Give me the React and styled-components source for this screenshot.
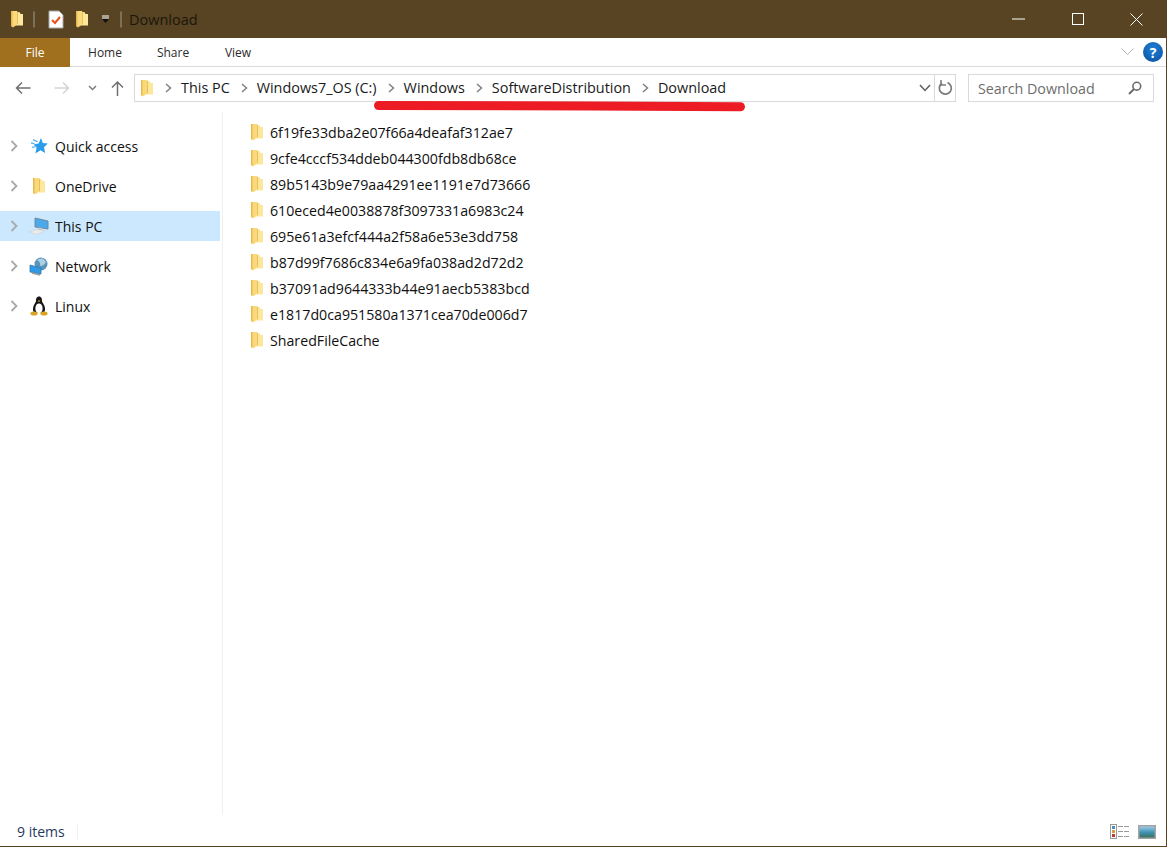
import React from "react";
import styled, { createGlobalStyle } from "styled-components";

const GlobalStyle = createGlobalStyle`
  html, body {
    margin: 0;
    padding: 0;
    background: #fff;
  }
  body {
    font-family: "Open Sans", "Noto Sans", "Liberation Sans", sans-serif;
    font-size: 14px;
    color: #1a1a1a;
  }
`;

const Page = styled.div`
  position: relative;
  width: 1168px;
  height: 848px;
  overflow: hidden;
`;

const Window = styled.div`
  width: 1166px;
  height: 846px;
  display: flex;
  flex-direction: column;
  border-right: 1px solid #584423;
  border-bottom: 1px solid #584423;
  background: #fff;
`;

const TitleBar = styled.div`
  height: 38px;
  flex: none;
  display: flex;
  align-items: center;
  background: #584423;
  padding-left: 10px;
`;

const TitleDivider = styled.span`
  width: 2px;
  height: 17px;
  margin-left: ${(p) => p.$left}px;
  border: 1px solid #7d7058;
  border-radius: 1px;
  box-sizing: border-box;
`;

const ChecklistIcon = styled.svg`
  margin-left: 13px;
  flex: none;
`;

const QuickFolder = styled.span`
  margin-left: 11px;
  display: flex;
`;

const QuickMenu = styled.svg`
  margin-left: 12px;
  flex: none;
`;

const TitleText = styled.span`
  font-size: 14.5px;
  color: #1c160a;
  margin-left: 7px;
`;

const WindowButtons = styled.div`
  margin-left: auto;
  display: flex;
  height: 100%;
  align-items: center;
`;

const WindowButton = styled.div`
  width: 59px;
  display: flex;
  justify-content: center;
  align-items: center;
  color: #fff;
`;

const Tabs = styled.div`
  height: 29px;
  flex: none;
  display: flex;
  align-items: stretch;
  border-bottom: 1px solid #dadbdc;
  box-sizing: border-box;
`;

const FileTab = styled.div`
  width: 70px;
  background: #a0701f;
  color: #fff;
  font-size: 12px;
  display: flex;
  align-items: center;
  justify-content: center;
  margin-bottom: -1px;
`;

const Tab = styled.div`
  width: ${(p) => p.$width}px;
  font-size: 12px;
  color: #2b2b2b;
  display: flex;
  align-items: center;
  justify-content: center;
`;

const TabEnd = styled.div`
  margin-left: auto;
  display: flex;
  align-items: center;
  gap: 9px;
  margin-right: 3px;
`;

const HelpBadge = styled.div`
  width: 20px;
  height: 20px;
  border-radius: 50%;
  background: radial-gradient(circle at 50% 35%, #1f7fd6, #0a4f9e);
  color: #fff;
  font-size: 14px;
  font-weight: 700;
  display: flex;
  align-items: center;
  justify-content: center;
`;

const NavRow = styled.div`
  height: 45px;
  flex: none;
  display: flex;
  align-items: flex-start;
  padding-top: 7px;
  box-sizing: border-box;
`;

const NavButtons = styled.div`
  width: 134px;
  height: 28px;
  flex: none;
  display: flex;
  align-items: center;
  padding-left: 15px;
  box-sizing: border-box;
`;

const NavIcon = styled.svg`
  flex: none;
  margin-right: ${(p) => p.$right || 0}px;
`;

const AddressBox = styled.div`
  width: 822px;
  height: 28px;
  box-sizing: border-box;
  border: 1px solid #d9d9d9;
  display: flex;
  align-items: center;
  padding-left: 5px;
  flex: none;
`;

const Crumb = styled.span`
  font-size: 14.4px;
  color: #1a1a1a;
  white-space: nowrap;
  position: relative;
  top: -1px;
`;

const CrumbArrow = styled.svg`
  flex: none;
  margin: 0 9px 0 11px;
`;

const AddressEnd = styled.div`
  margin-left: auto;
  display: flex;
  align-items: center;
  height: 100%;
`;

const RefreshCell = styled.div`
  width: 20px;
  height: 100%;
  margin-left: 3px;
  border-left: 1px solid #d9d9d9;
  display: flex;
  align-items: center;
  justify-content: center;
`;

const SearchBox = styled.div`
  width: 186px;
  height: 28px;
  margin-left: 12px;
  box-sizing: border-box;
  border: 1px solid #d9d9d9;
  display: flex;
  align-items: center;
  justify-content: space-between;
  padding: 0 11px 0 9px;
  flex: none;
  font-size: 14.3px;
  color: #6d6d6d;
`;

const Body = styled.div`
  flex: 1;
  display: flex;
  min-height: 0;
`;

const Sidebar = styled.div`
  width: 223px;
  flex: none;
  box-sizing: border-box;
  border-right: 1px solid #f0f0f0;
  padding-top: 19px;
  display: flex;
  flex-direction: column;
  gap: 10px;
`;

const TreeRow = styled.div`
  width: 220px;
  height: 30px;
  display: flex;
  align-items: center;
  background: ${(p) => (p.$selected ? "#cce8ff" : "transparent")};
`;

const TreeChevron = styled.svg`
  margin-left: 10px;
  flex: none;
`;

const TreeIcon = styled.div`
  width: 22px;
  margin-left: 10px;
  flex: none;
  display: flex;
  justify-content: center;
`;

const TreeLabel = styled.span`
  margin-left: 5px;
  font-size: 14px;
  color: #101010;
`;

const FileList = styled.div`
  flex: 1;
  padding: 7px 0 0 27px;
  display: flex;
  flex-direction: column;
`;

const FileRow = styled.div`
  height: 26px;
  display: flex;
  align-items: center;
  gap: 6px;
  font-size: 14.2px;
  color: #101010;
`;

const StatusBar = styled.div`
  height: 31px;
  flex: none;
  display: flex;
  align-items: center;
  padding: 2px 0 0 17px;
  box-sizing: border-box;
  font-size: 14px;
  color: #1f3a5f;
`;

const StatusDivider = styled.span`
  width: 1px;
  height: 14px;
  background: #efefef;
  margin-left: 12px;
`;

const ViewIcons = styled.div`
  margin-left: auto;
  margin-right: 10px;
  display: flex;
  gap: 9px;
  align-items: center;
`;

const RedMark = styled.svg`
  position: absolute;
  left: 372px;
  top: 98px;
`;

const Folder = () => (
  <svg width="14" height="18" viewBox="0 0 14 18">
    <path d="M5 2.5 L9.5 2 L10.5 4 L13 4 L13 15.5 L5 15.5 Z" fill="#fde79c" />
    <path d="M1 1 L7 1 L7 14.5 L3 17.5 L1 16 Z" fill="#f9d97a" />
    <path d="M1 1 L2.5 1 L2.5 16.8 L1 16 Z" fill="#e8b84e" />
    <path d="M7 1 L8 2.5 L8 14 L7 14.5 Z" fill="#e7c05f" />
  </svg>
);

const Chevron = () => (
  <TreeChevron width="8" height="12" viewBox="0 0 8 12">
    <path d="M1.5 1 L6.5 6 L1.5 11" fill="none" stroke="#a9a9a9" strokeWidth="1.8" />
  </TreeChevron>
);

const Arrow = () => (
  <CrumbArrow width="7" height="10" viewBox="0 0 7 10">
    <path d="M1 1 L5.5 5 L1 9" fill="none" stroke="#808080" strokeWidth="1.5" />
  </CrumbArrow>
);

const StarIcon = () => (
  <svg width="18" height="18" viewBox="0 0 18 18">
    <path d="M11 1 L12.8 6 L17.8 6.6 L14 10.2 L15.2 16 L10.4 13.2 L5.4 16.4 L6.6 10.6 L3.6 7.6 L8.6 6.4 Z" fill="#2a9cec" />
    <path d="M3 2.6 L7.6 4.8 M1 6 L4.6 6.6 M2 10.4 L5.4 9.6" stroke="#5fb4ee" strokeWidth="1.3" />
  </svg>
);

const PcIcon = () => (
  <svg width="22" height="18" viewBox="0 0 22 18">
    <path d="M7 1 L20 4 L20 12 L7 10 Z" fill="#49a9ea" stroke="#6d8496" strokeWidth="0.9" />
    <path d="M10 10.5 L14 11 L14 13 L10 13 Z" fill="#c8c8c8" />
    <path d="M1 15 L9 12.5 L17 14 L9 17.5 Z" fill="#eaeaea" stroke="#d0d0d0" strokeWidth="0.6" />
  </svg>
);

const NetworkIcon = () => (
  <svg width="20" height="19" viewBox="0 0 20 19">
    <circle cx="12" cy="7" r="6.5" fill="#5b93b8" />
    <path d="M8 3 Q12 5 11 9 Q15 9 17 5 L14 1.5 Q10 1 8 3 Z" fill="#a9d0e4" />
    <path d="M1 8 L12 11 L12 17 L1 15 Z" fill="#2f9be6" stroke="#3478a8" strokeWidth="0.8" />
    <path d="M3 16 L11 18" stroke="#9a9a9a" strokeWidth="1.4" />
  </svg>
);

const TuxIcon = () => (
  <svg width="18" height="20" viewBox="0 0 18 20">
    <path d="M9 0.5 C11.5 0.5 12.2 3 12 5.5 C13.5 8 15.5 11 15 14 L14 17 L4 17 L3 14 C2.5 11 4.5 8 6 5.5 C5.8 3 6.5 0.5 9 0.5 Z" fill="#151515" />
    <ellipse cx="9" cy="12.4" rx="3.6" ry="5" fill="#fff" />
    <path d="M7.6 4.4 L10.4 4.4 L9 6.2 Z" fill="#d9a520" />
    <ellipse cx="4" cy="17.5" rx="3.6" ry="2" fill="#d9a520" />
    <ellipse cx="14" cy="17.5" rx="3.6" ry="2" fill="#d9a520" />
  </svg>
);

const TREE = [
  { label: "Quick access", icon: <StarIcon /> },
  { label: "OneDrive", icon: <Folder /> },
  { label: "This PC", icon: <PcIcon />, selected: true },
  { label: "Network", icon: <NetworkIcon /> },
  { label: "Linux", icon: <TuxIcon /> },
];

const FILES = [
  "6f19fe33dba2e07f66a4deafaf312ae7",
  "9cfe4cccf534ddeb044300fdb8db68ce",
  "89b5143b9e79aa4291ee1191e7d73666",
  "610eced4e0038878f3097331a6983c24",
  "695e61a3efcf444a2f58a6e53e3dd758",
  "b87d99f7686c834e6a9fa038ad2d72d2",
  "b37091ad9644333b44e91aecb5383bcd",
  "e1817d0ca951580a1371cea70de006d7",
  "SharedFileCache",
];

const CRUMBS = ["This PC", "Windows7_OS (C:)", "Windows", "SoftwareDistribution", "Download"];

export default function App() {
  return (
    <Page>
      <GlobalStyle />
      <Window>
        <TitleBar>
          <Folder />
          <TitleDivider $left={9} />
          <ChecklistIcon width="16" height="19" viewBox="0 0 16 19">
            <path d="M1 1 H11 L15 5 V18 H1 Z" fill="#fff" stroke="#a8a8a8" />
            <path d="M4 10 L7 13 L12 7" fill="none" stroke="#e8501f" strokeWidth="2" />
          </ChecklistIcon>
          <QuickFolder>
            <Folder />
          </QuickFolder>
          <QuickMenu width="9" height="9" viewBox="0 0 9 9">
            <path d="M1 1 H8 M1 3 H8" stroke="#fff" strokeWidth="1" />
            <path d="M1 4 H8 L4.5 8 Z" fill="#111" />
          </QuickMenu>
          <TitleDivider $left={10} />
          <TitleText>Download</TitleText>
          <WindowButtons>
            <WindowButton>
              <svg width="13" height="2" viewBox="0 0 13 2">
                <path d="M0 1 H13" stroke="#fff" strokeWidth="1" />
              </svg>
            </WindowButton>
            <WindowButton>
              <svg width="12" height="12" viewBox="0 0 12 12">
                <rect x="0.5" y="0.5" width="11" height="11" fill="none" stroke="#fff" />
              </svg>
            </WindowButton>
            <WindowButton>
              <svg width="13" height="13" viewBox="0 0 13 13">
                <path d="M0.5 0.5 L12.5 12.5 M12.5 0.5 L0.5 12.5" stroke="#fff" />
              </svg>
            </WindowButton>
          </WindowButtons>
        </TitleBar>

        <Tabs>
          <FileTab>File</FileTab>
          <Tab $width={70}>Home</Tab>
          <Tab $width={66}>Share</Tab>
          <Tab $width={64}>View</Tab>
          <TabEnd>
            <svg width="13" height="8" viewBox="0 0 13 8">
              <path d="M0.5 0.5 L6.5 6.5 L12.5 0.5" fill="none" stroke="#b5b5b5" />
            </svg>
            <HelpBadge>?</HelpBadge>
          </TabEnd>
        </Tabs>

        <NavRow>
          <NavButtons>
            <NavIcon $right={23} width="16" height="14" viewBox="0 0 16 14">
              <path d="M15.5 7 H1.5 M7 1.5 L1.5 7 L7 12.5" fill="none" stroke="#6f6f6f" strokeWidth="1.5" />
            </NavIcon>
            <NavIcon $right={18} width="16" height="14" viewBox="0 0 16 14">
              <path d="M0.5 7 H14.5 M9 1.5 L14.5 7 L9 12.5" fill="none" stroke="#d4d4d4" strokeWidth="1.5" />
            </NavIcon>
            <NavIcon $right={14} width="9" height="6" viewBox="0 0 9 6">
              <path d="M1 1 L4.5 4.5 L8 1" fill="none" stroke="#7d7d7d" strokeWidth="1.5" />
            </NavIcon>
            <NavIcon width="13" height="16" viewBox="0 0 13 16">
              <path d="M6.5 16 V2 M1 7.5 L6.5 2 L12 7.5" fill="none" stroke="#6f6f6f" strokeWidth="1.5" />
            </NavIcon>
          </NavButtons>

          <AddressBox>
            <Folder />
            {CRUMBS.map((crumb) => (
              <React.Fragment key={crumb}>
                <Arrow />
                <Crumb>{crumb}</Crumb>
              </React.Fragment>
            ))}
            <AddressEnd>
              <svg width="12" height="8" viewBox="0 0 12 8">
                <path d="M1 1 L6 6.5 L11 1" fill="none" stroke="#5f5f5f" strokeWidth="1.5" />
              </svg>
              <RefreshCell>
                <svg width="15" height="16" viewBox="0 0 15 16">
                  <path d="M9.5 2.6 A6 6 0 1 1 4 3.2" fill="none" stroke="#7a7a7a" strokeWidth="1.7" />
                  <path d="M3 0 V5 H8" fill="none" stroke="#7a7a7a" strokeWidth="1.5" />
                </svg>
              </RefreshCell>
            </AddressEnd>
          </AddressBox>

          <SearchBox>
            <span>Search Download</span>
            <svg width="14" height="14" viewBox="0 0 14 14">
              <circle cx="8.8" cy="5.2" r="3.9" fill="none" stroke="#6b6b6b" strokeWidth="1.6" />
              <path d="M6 8 L1 13" stroke="#6b6b6b" strokeWidth="2" />
            </svg>
          </SearchBox>
        </NavRow>

        <Body>
          <Sidebar>
            {TREE.map((item) => (
              <TreeRow key={item.label} $selected={item.selected}>
                <Chevron />
                <TreeIcon>{item.icon}</TreeIcon>
                <TreeLabel>{item.label}</TreeLabel>
              </TreeRow>
            ))}
          </Sidebar>
          <FileList>
            {FILES.map((name) => (
              <FileRow key={name}>
                <Folder />
                <span>{name}</span>
              </FileRow>
            ))}
          </FileList>
        </Body>

        <StatusBar>
          9 items
          <StatusDivider />
          <ViewIcons>
            <svg width="19" height="15" viewBox="0 0 19 15">
              <rect x="0.5" y="0.5" width="6" height="14" fill="#fff" stroke="#9a9a9a" />
              <rect x="2" y="2" width="3" height="3" fill="#4f8fb5" />
              <rect x="2" y="6" width="3" height="3" fill="#d89a3c" />
              <rect x="2" y="10" width="3" height="3" fill="#c0392b" />
              <path d="M8 2.5 H19 M8 7.5 H19 M8 12.5 H19" stroke="#9a9a9a" strokeDasharray="5 1" />
            </svg>
            <svg width="18" height="14" viewBox="0 0 18 14">
              <defs>
                <linearGradient id="thumb" x1="0" y1="0" x2="0" y2="1">
                  <stop offset="0" stopColor="#a8d4ee" />
                  <stop offset="0.55" stopColor="#3d8fb0" />
                  <stop offset="1" stopColor="#3c6f4f" />
                </linearGradient>
              </defs>
              <rect x="0.75" y="0.75" width="16.5" height="12.5" fill="url(#thumb)" stroke="#a3a3a3" strokeWidth="1.5" />
            </svg>
          </ViewIcons>
        </StatusBar>
      </Window>

      <RedMark width="375" height="14" viewBox="0 0 375 14">
        <path d="M6.5 7.5 C120 7.5 250 8 368.5 8.7" fill="none" stroke="#ed1c24" strokeWidth="9" strokeLinecap="round" />
      </RedMark>
    </Page>
  );
}
